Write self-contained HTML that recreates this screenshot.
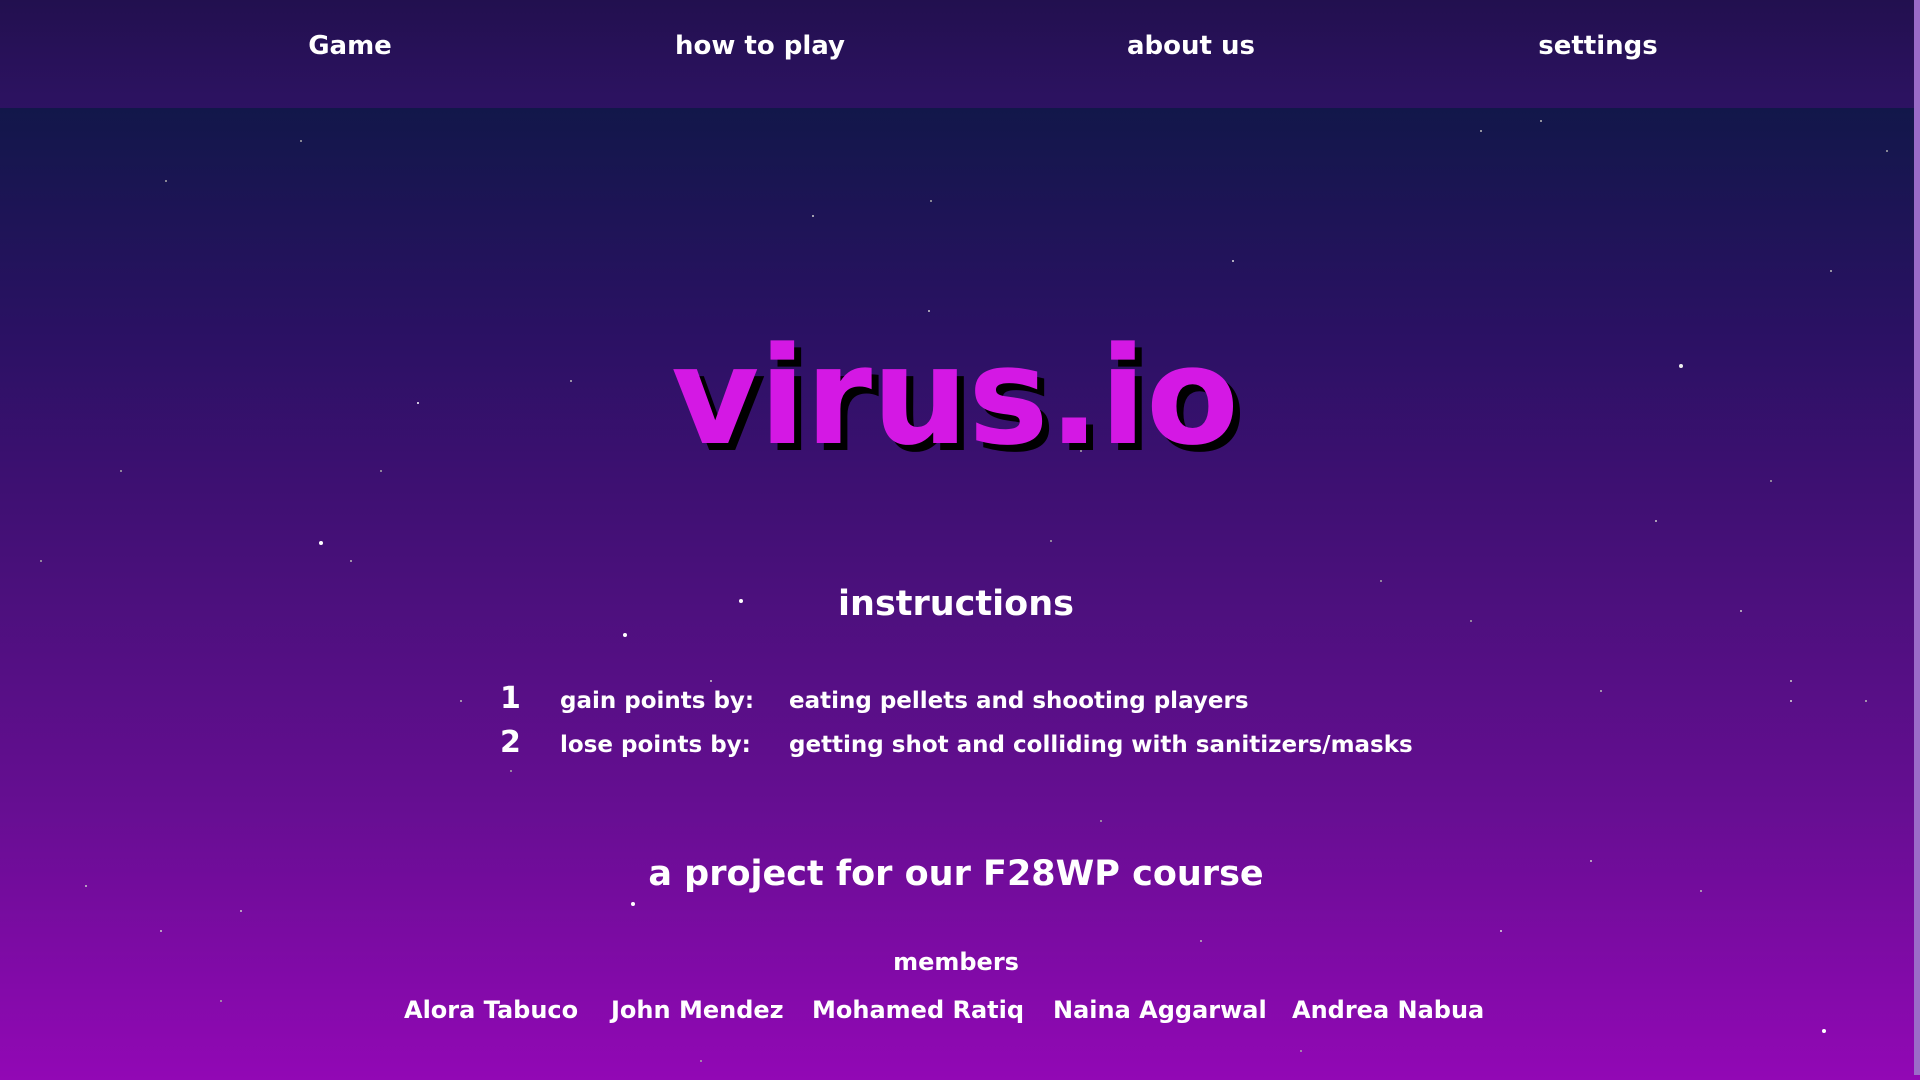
<!DOCTYPE html>
<html><head><meta charset="utf-8"><style>
html,body{margin:0;padding:0;width:1920px;height:1080px;overflow:hidden}
body{position:relative;font-family:"DejaVu Sans","Liberation Sans",sans-serif;font-weight:bold;color:#fff;
background:linear-gradient(180deg,#12174a 0px,#12174a 108px,#2a1163 330px,#471079 560px,#650e91 800px,#9208b5 1080px);}
.nav{position:absolute;left:0;top:0;width:1914px;height:108px;background:linear-gradient(180deg,#22104f,#2d1262)}
.t{position:absolute;white-space:nowrap;line-height:1}
.c{transform:translateX(-50%)}
.sb{position:absolute;left:1914px;top:0;width:6px;height:1075px;background:#9b6bc8}
.stars{position:absolute;left:0;top:0;width:2px;height:2px;border-radius:50%;background:transparent}
</style></head><body>
<div class="nav"></div>
<div class="stars" style="box-shadow:
740px 600px 0 1px #fff,624px 634px 0 1px #fff,632px 903px 0 1px #fff,417px 402px 0 0 #fff,320px 542px 0 1px #fff,1680px 365px 0 1px #eee,1232px 260px 0 0 #ddd,
928px 310px 0 0 #ccc,812px 215px 0 0 #ccc,1823px 1030px 0 1px #fff,1790px 700px 0 0 #ddd,1500px 930px 0 0 #ddd,240px 910px 0 0 #ccc,85px 885px 0 0 #ccc,
160px 930px 0 0 #ccc,570px 380px 0 0 #bbb,1655px 520px 0 0 #ccc,1740px 610px 0 0 #ccc,1790px 680px 0 0 #ccc,1480px 130px 0 0 #bbb,1540px 120px 0 0 #bbb,
350px 560px 0 0 #bbb,710px 680px 0 0 #ccc,1590px 860px 0 0 #ccc,1700px 890px 0 0 #bbb,1200px 940px 0 0 #bbb,1310px 740px 0 0 #bbb,460px 700px 0 0 #bbb,
300px 140px 0 0 #aaa,165px 180px 0 0 #aaa,1470px 620px 0 0 #aaa,1600px 690px 0 0 #bbb,930px 200px 0 0 #aaa,1080px 450px 0 0 #aaa,1050px 540px 0 0 #aaa,
380px 470px 0 0 #aaa,40px 560px 0 0 #aaa,120px 470px 0 0 #aaa,1865px 700px 0 0 #bbb,1830px 270px 0 0 #bbb,1886px 150px 0 0 #aaa,510px 770px 0 0 #aaa,
1380px 580px 0 0 #aaa,1770px 480px 0 0 #aaa,220px 1000px 0 0 #aaa,700px 1060px 0 0 #aaa,1300px 1050px 0 0 #aaa,1100px 820px 0 0 #aaa"></div>

<div class="t c" style="left:350px;top:33px;font-size:26px">Game</div>
<div class="t c" style="left:760px;top:33px;font-size:26px">how to play</div>
<div class="t c" style="left:1191px;top:33px;font-size:26px">about us</div>
<div class="t c" style="left:1598px;top:33px;font-size:26px">settings</div>

<div class="t c" style="left:955px;top:329px;font-size:135px;color:#d418e4;text-shadow:7px 7px 0 #000">virus.io</div>

<div class="t c" style="left:956px;top:587px;font-size:35px">instructions</div>

<div class="t" style="left:500px;top:684px;font-size:30px">1</div>
<div class="t" style="left:560px;top:690px;font-size:23px">gain points by:</div>
<div class="t" style="left:789px;top:690px;font-size:23px">eating pellets and shooting players</div>
<div class="t" style="left:500px;top:728px;font-size:30px">2</div>
<div class="t" style="left:560px;top:734px;font-size:23px">lose points by:</div>
<div class="t" style="left:789px;top:734px;font-size:23px">getting shot and colliding with sanitizers/masks</div>

<div class="t c" style="left:956px;top:857px;font-size:35px">a project for our F28WP course</div>
<div class="t c" style="left:956px;top:950px;font-size:24px">members</div>

<div class="t" style="left:404px;top:998px;font-size:24px">Alora Tabuco</div>
<div class="t" style="left:611px;top:998px;font-size:24px">John Mendez</div>
<div class="t" style="left:812px;top:998px;font-size:24px">Mohamed Ratiq</div>
<div class="t" style="left:1053px;top:998px;font-size:24px">Naina Aggarwal</div>
<div class="t" style="left:1292px;top:998px;font-size:24px">Andrea Nabua</div>

<div class="sb"></div>
</body></html>
